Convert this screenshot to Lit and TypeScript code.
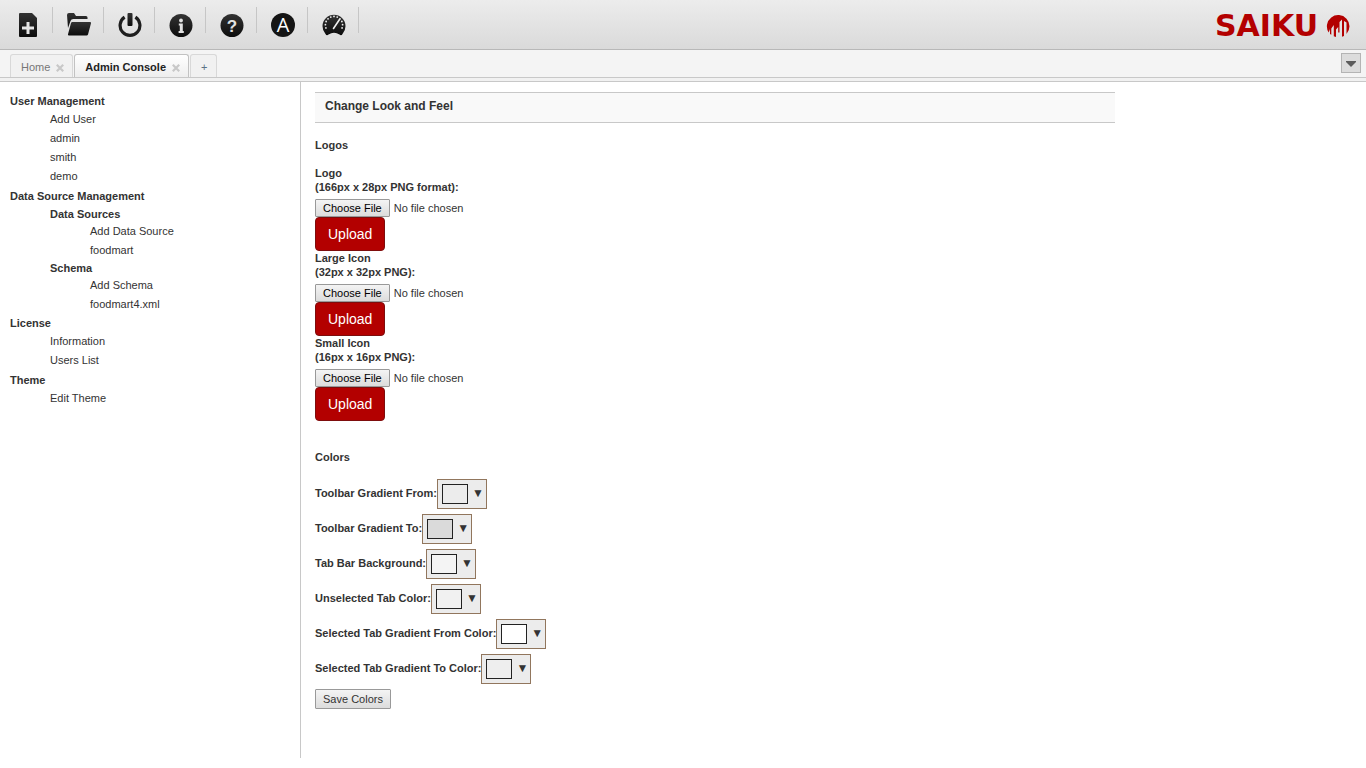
import { LitElement, html, css, svg } from "lit";
import { customElement } from "lit/decorators.js";
import { styleMap } from "lit/directives/style-map.js";

type Leaf = string;
interface Group {
  title: string;
  items?: Leaf[];
  groups?: Group[];
}

const NAV: Group[] = [
  { title: "User Management", items: ["Add User", "admin", "smith", "demo"] },
  {
    title: "Data Source Management",
    groups: [
      { title: "Data Sources", items: ["Add Data Source", "foodmart"] },
      { title: "Schema", items: ["Add Schema", "foodmart4.xml"] },
    ],
  },
  { title: "License", items: ["Information", "Users List"] },
  { title: "Theme", items: ["Edit Theme"] },
];

const UPLOADS = [
  { id: "logo", name: "Logo", hint: "(166px x 28px PNG format):" },
  { id: "large-icon", name: "Large Icon", hint: "(32px x 32px PNG):" },
  { id: "small-icon", name: "Small Icon", hint: "(16px x 16px PNG):" },
];

const COLORS = [
  { id: "toolbar-from", name: "Toolbar Gradient From:", value: "#ececec" },
  { id: "toolbar-to", name: "Toolbar Gradient To:", value: "#dadada" },
  { id: "tabbar", name: "Tab Bar Background:", value: "#f4f4f4" },
  { id: "tab-off", name: "Unselected Tab Color:", value: "#f1f1f1" },
  { id: "tab-from", name: "Selected Tab Gradient From Color:", value: "#ffffff" },
  { id: "tab-to", name: "Selected Tab Gradient To Color:", value: "#eeeeee" },
];

const gaugeTicks = Array.from({ length: 11 }, (_, i) => {
  const a = ((160 + i * 22) * Math.PI) / 180;
  return svg`<circle cx=${12 + 8.6 * Math.cos(a)} cy=${13 + 8.6 * Math.sin(a)} r="0.9" fill="#f0f0f0"></circle>`;
});

const ICONS = [
  {
    label: "New query",
    art: svg`<path fill="url(#ink)" d="M3 2a1 1 0 0 1 1-1h12l5 5v18a1 1 0 0 1-1 1H4a1 1 0 0 1-1-1z"></path>
      <path fill="#e6e6e6" d="M10.500 10h3v4.500H18v3h-4.500V22h-3v-4.500H6v-3h4.500z"></path>`,
  },
  {
    label: "Open query",
    art: svg`<path fill="url(#ink)" d="M0 3a2 2 0 0 1 2-2h5l2 3h10a1.500 1.500 0 0 1 1.500 1.500V7H6.500a3 3 0 0 0-3 2L1 16z"></path>
      <path fill="url(#ink)" d="M5.500 10h17.500a1 1 0 0 1 1 1.200l-3 11.300a1.500 1.500 0 0 1-1.500 1H2a1 1 0 0 1-1-1.200L4 11A1.500 1.500 0 0 1 5.500 10z"></path>`,
  },
  {
    label: "Logout",
    art: svg`<path fill="none" stroke="#1e1e1e" stroke-width="3.200" d="M6.600 5.200A9.900 9.900 0 1 0 17.400 5.200"></path>
      <rect x="9.500" y="1" width="5" height="13" rx="1" fill="url(#ink)"></rect>`,
  },
  {
    label: "About",
    art: svg`<circle cx="12" cy="13.500" r="11.500" fill="url(#ink)"></circle>
      <circle cx="12" cy="8.500" r="1.900" fill="#e2e2e2"></circle>
      <path fill="#e2e2e2" d="M9.800 11.500h4v7.500h1v2H9.600v-2h1.200v-5.500h-1z"></path>`,
  },
  {
    label: "Issue tracker",
    art: svg`<circle cx="12" cy="13.500" r="11.500" fill="url(#ink)"></circle>
      <text x="12" y="19.500" text-anchor="middle" font-size="17" font-weight="700" fill="#e2e2e2">?</text>`,
  },
  {
    label: "Admin console",
    art: svg`<circle cx="12" cy="13" r="12" fill="#151515"></circle>
      <text x="12" y="20" text-anchor="middle" class="thin" font-size="20" fill="#fff">A</text>`,
  },
  {
    label: "Dashboards",
    art: svg`<path fill="url(#ink)" d="M3.500 22A11.500 11.500 0 1 1 20.500 22a2 2 0 0 1-3 .6 10 10 0 0 0-11 0 2 2 0 0 1-3-.6z"></path>
      ${gaugeTicks}
      <path stroke="#f0f0f0" stroke-width="1.600" stroke-linecap="round" d="M11.500 16.500L17.500 7.500"></path>`,
  },
];

@customElement("app-root")
export class AppRoot extends LitElement {
  static styles = css`
    * { box-sizing: border-box; }
    :host {
      display: flex;
      flex-direction: column;
      min-height: 100vh;
      padding-bottom: 10px;
      box-sizing: border-box;
      background: #fff;
      color: #333;
      font: 11px/14px "Liberation Sans", Arial, sans-serif;
    }
    button, input { font: inherit; color: inherit; margin: 0; }
    a { color: inherit; text-decoration: none; }
    ul, h1, h2, h3 { margin: 0; padding: 0; list-style: none; font-size: inherit; }
    .toolbar {
      display: flex;
      align-items: flex-start;
      justify-content: space-between;
      height: 50px;
      padding: 0 16px 0 2px;
      border-bottom: 1px solid #b8b8b8;
      background: linear-gradient(#ececec, #dadada);
    }
    .tools { display: flex; padding-top: 7px; }
    .tool { width: 51px; height: 26px; border-right: 1px solid #c6c6c6; }
    .tool button {
      width: 100%;
      height: 35px;
      padding: 0 0 0 2px;
      border: 0;
      background: none;
    }
    .glyph { display: block; width: 24px; height: 25px; margin: 0 auto; }
    .thin { font-family: "Open Sans", sans-serif; }
    .defs { position: absolute; width: 0; height: 0; }
    .brand {
      display: flex;
      align-items: center;
      gap: 8px;
      height: 50px;
      padding-top: 2px;
      color: #b30000;
      font: bold 30px/36px "DejaVu Sans", "Liberation Sans", sans-serif;
    }
    .flame { display: block; width: 24px; height: 24px; }
    .tabbar {
      display: flex;
      align-items: flex-end;
      justify-content: space-between;
      height: 28px;
      padding: 0 5px 0 10px;
      border-bottom: 1px solid #c8c8c8;
      background: #f4f4f4;
    }
    .tabs { display: flex; gap: 1px; }
    .tab {
      display: flex;
      align-items: center;
      gap: 6px;
      height: 23px;
      padding: 2px 8px 0 10px;
      border: 1px solid #d8d8d8;
      border-bottom: 0;
      border-radius: 3px 3px 0 0;
      background: #f1f1f1;
      color: #777;
    }
    .tab.on {
      border-color: #c2c2c2;
      background: linear-gradient(#fff, #eee);
      color: #222;
      font-weight: bold;
    }
    .tab.add { padding: 2px 9px 0 10px; color: #5b7186; }
    .close { width: 8px; height: 10px; padding: 2px 0 0; border: 0; background: none; }
    .close svg { display: block; width: 8px; height: 8px; }
    .more {
      display: grid;
      place-items: center;
      width: 20px;
      height: 20px;
      padding: 2px 0 0;
      margin-bottom: 4px;
      border: 1px solid #b4b4b4;
      background: #dcdcdc;
    }
    .strip { height: 4px; border-bottom: 1px solid #c8c8c8; background: #f1f1f1; }
    .body { display: flex; flex: 1; }
    .side { flex: 0 0 301px; padding: 11px 10px; border-right: 1px solid #c8c8c8; }
    .section + .section { margin-top: 2px; }
    .section h2 { line-height: 17px; }
    .section > ul, .section > .nested { padding-left: 40px; }
    .nested { padding-top: 1px; margin-bottom: -1px; }
    .group { margin-top: 1px; }
    .group h3 { line-height: 15px; }
    .group ul { padding-left: 40px; }
    .side li { line-height: 19px; }
    .main { flex: 1; min-width: 0; padding: 10px 14px; }
    .title {
      max-width: 800px;
      padding: 6px 10px 9px;
      border: solid #c8c8c8;
      border-width: 1px 0;
      background: #f9f9f9;
      font-size: 12px;
    }
    .main h2 { padding: 15px 0 14px; }
    .main .colors-title { padding-top: 29px; padding-bottom: 15px; }
    .upload label { display: block; margin-bottom: 5px; font-weight: bold; }
    .upload label span { display: block; }
    .file { display: block; width: 240px; height: 18px; line-height: 18px; }
    .file::file-selector-button {
      height: 18px;
      margin: 0 4px 0 0;
      padding: 0 7px;
      border: 1px solid #999;
      border-radius: 1px;
      background: linear-gradient(#f4f4f4, #dcdcdc);
      color: #000;
      font: 11px/14px "Liberation Sans", Arial, sans-serif;
    }
    .send {
      display: block;
      height: 34px;
      padding: 0 12px;
      border: 1px solid #7e0d0d;
      border-radius: 4px;
      background: #b30000;
      color: #fff;
      font-size: 14px;
    }
    .color { display: flex; align-items: center; margin-bottom: 5px; font-weight: bold; }
    .color label { padding-bottom: 2px; }
    .picker {
      display: flex;
      align-items: center;
      gap: 4px;
      width: 50px;
      height: 30px;
      padding: 0 4px;
      border: 1px solid #91765d;
      background: #ececec;
      font-size: 12px;
      font-weight: normal;
    }
    .swatch { flex: none; width: 26px; height: 20px; border: 1px solid #222; }
    .caret { padding-bottom: 2px; }
    .save {
      display: block;
      height: 20px;
      padding: 0 7px;
      border: 1px solid #999;
      border-radius: 1px;
      background: linear-gradient(#f4f4f4, #dcdcdc);
    }
  `;

  private leaves(items: Leaf[]) {
    return html`<ul>${items.map((t) => html`<li><a href="#">${t}</a></li>`)}</ul>`;
  }

  private closeButton(name: string) {
    return html`<button class="close" aria-label="Close ${name}">
      <svg viewBox="0 0 8 8"><path d="M.8 .8l6.400 6.400M7.200 .8L.8 7.200" stroke="#c8c8c8" stroke-width="2.200"></path></svg>
    </button>`;
  }

  render() {
    return html`
      <svg class="defs" aria-hidden="true">
        <linearGradient id="ink" x1="0" y1="0" x2="0" y2="1">
          <stop offset="0" stop-color="#333"></stop>
          <stop offset="1" stop-color="#0c0c0c"></stop>
        </linearGradient>
      </svg>
      <header class="toolbar">
        <div class="tools">
          ${ICONS.map((i) => html`<div class="tool">
            <button aria-label=${i.label}><svg class="glyph" viewBox="0 0 24 25">${i.art}</svg></button>
          </div>`)}
        </div>
        <div class="brand">
          <span>SAIKU</span>
          <svg class="flame" viewBox="0 0 24 24" aria-hidden="true">
            <path fill="#b30000" d="M2.700 18.500A11.300 11.300 0 1 1 20.500 20V8.500L18 7v15l-2 .8V5.500L13.500 8v10.500h-1.300V13L10 15.500V23l-2.200-.7V11L5.300 14.500V20.800L4 20v-5z"></path>
          </svg>
        </div>
      </header>
      <nav class="tabbar">
        <div class="tabs">
          <div class="tab"><a href="#">Home</a>${this.closeButton("Home")}</div>
          <div class="tab on"><a href="#">Admin Console</a>${this.closeButton("Admin Console")}</div>
          <a class="tab add" href="#">+</a>
        </div>
        <button class="more" aria-label="All tabs">
          <svg width="10" height="6" viewBox="0 0 10 6"><path d="M0 0h10v1L5 6 0 1z" fill="#5c5c5c"></path></svg>
        </button>
      </nav>
      <div class="strip"></div>
      <div class="body">
        <aside class="side">
          ${NAV.map((s) => html`<div class="section">
            <h2>${s.title}</h2>
            ${s.items ? this.leaves(s.items) : ""}
            ${s.groups
              ? html`<div class="nested">${s.groups.map((g) => html`<div class="group">
                  <h3>${g.title}</h3>${this.leaves(g.items ?? [])}
                </div>`)}</div>`
              : ""}
          </div>`)}
        </aside>
        <main class="main">
          <h1 class="title">Change Look and Feel</h1>
          <h2>Logos</h2>
          ${UPLOADS.map((u) => html`<div class="upload">
            <label for=${u.id}><span>${u.name}</span><span>${u.hint}</span></label>
            <input class="file" type="file" id=${u.id} accept="image/png">
            <button class="send">Upload</button>
          </div>`)}
          <h2 class="colors-title">Colors</h2>
          ${COLORS.map((c) => html`<div class="color">
            <label for=${c.id}>${c.name}</label>
            <button class="picker" id=${c.id}>
              <span class="swatch" style=${styleMap({ background: c.value })}></span><span class="caret">▼</span>
            </button>
          </div>`)}
          <button class="save">Save Colors</button>
        </main>
      </div>
    `;
  }
}
